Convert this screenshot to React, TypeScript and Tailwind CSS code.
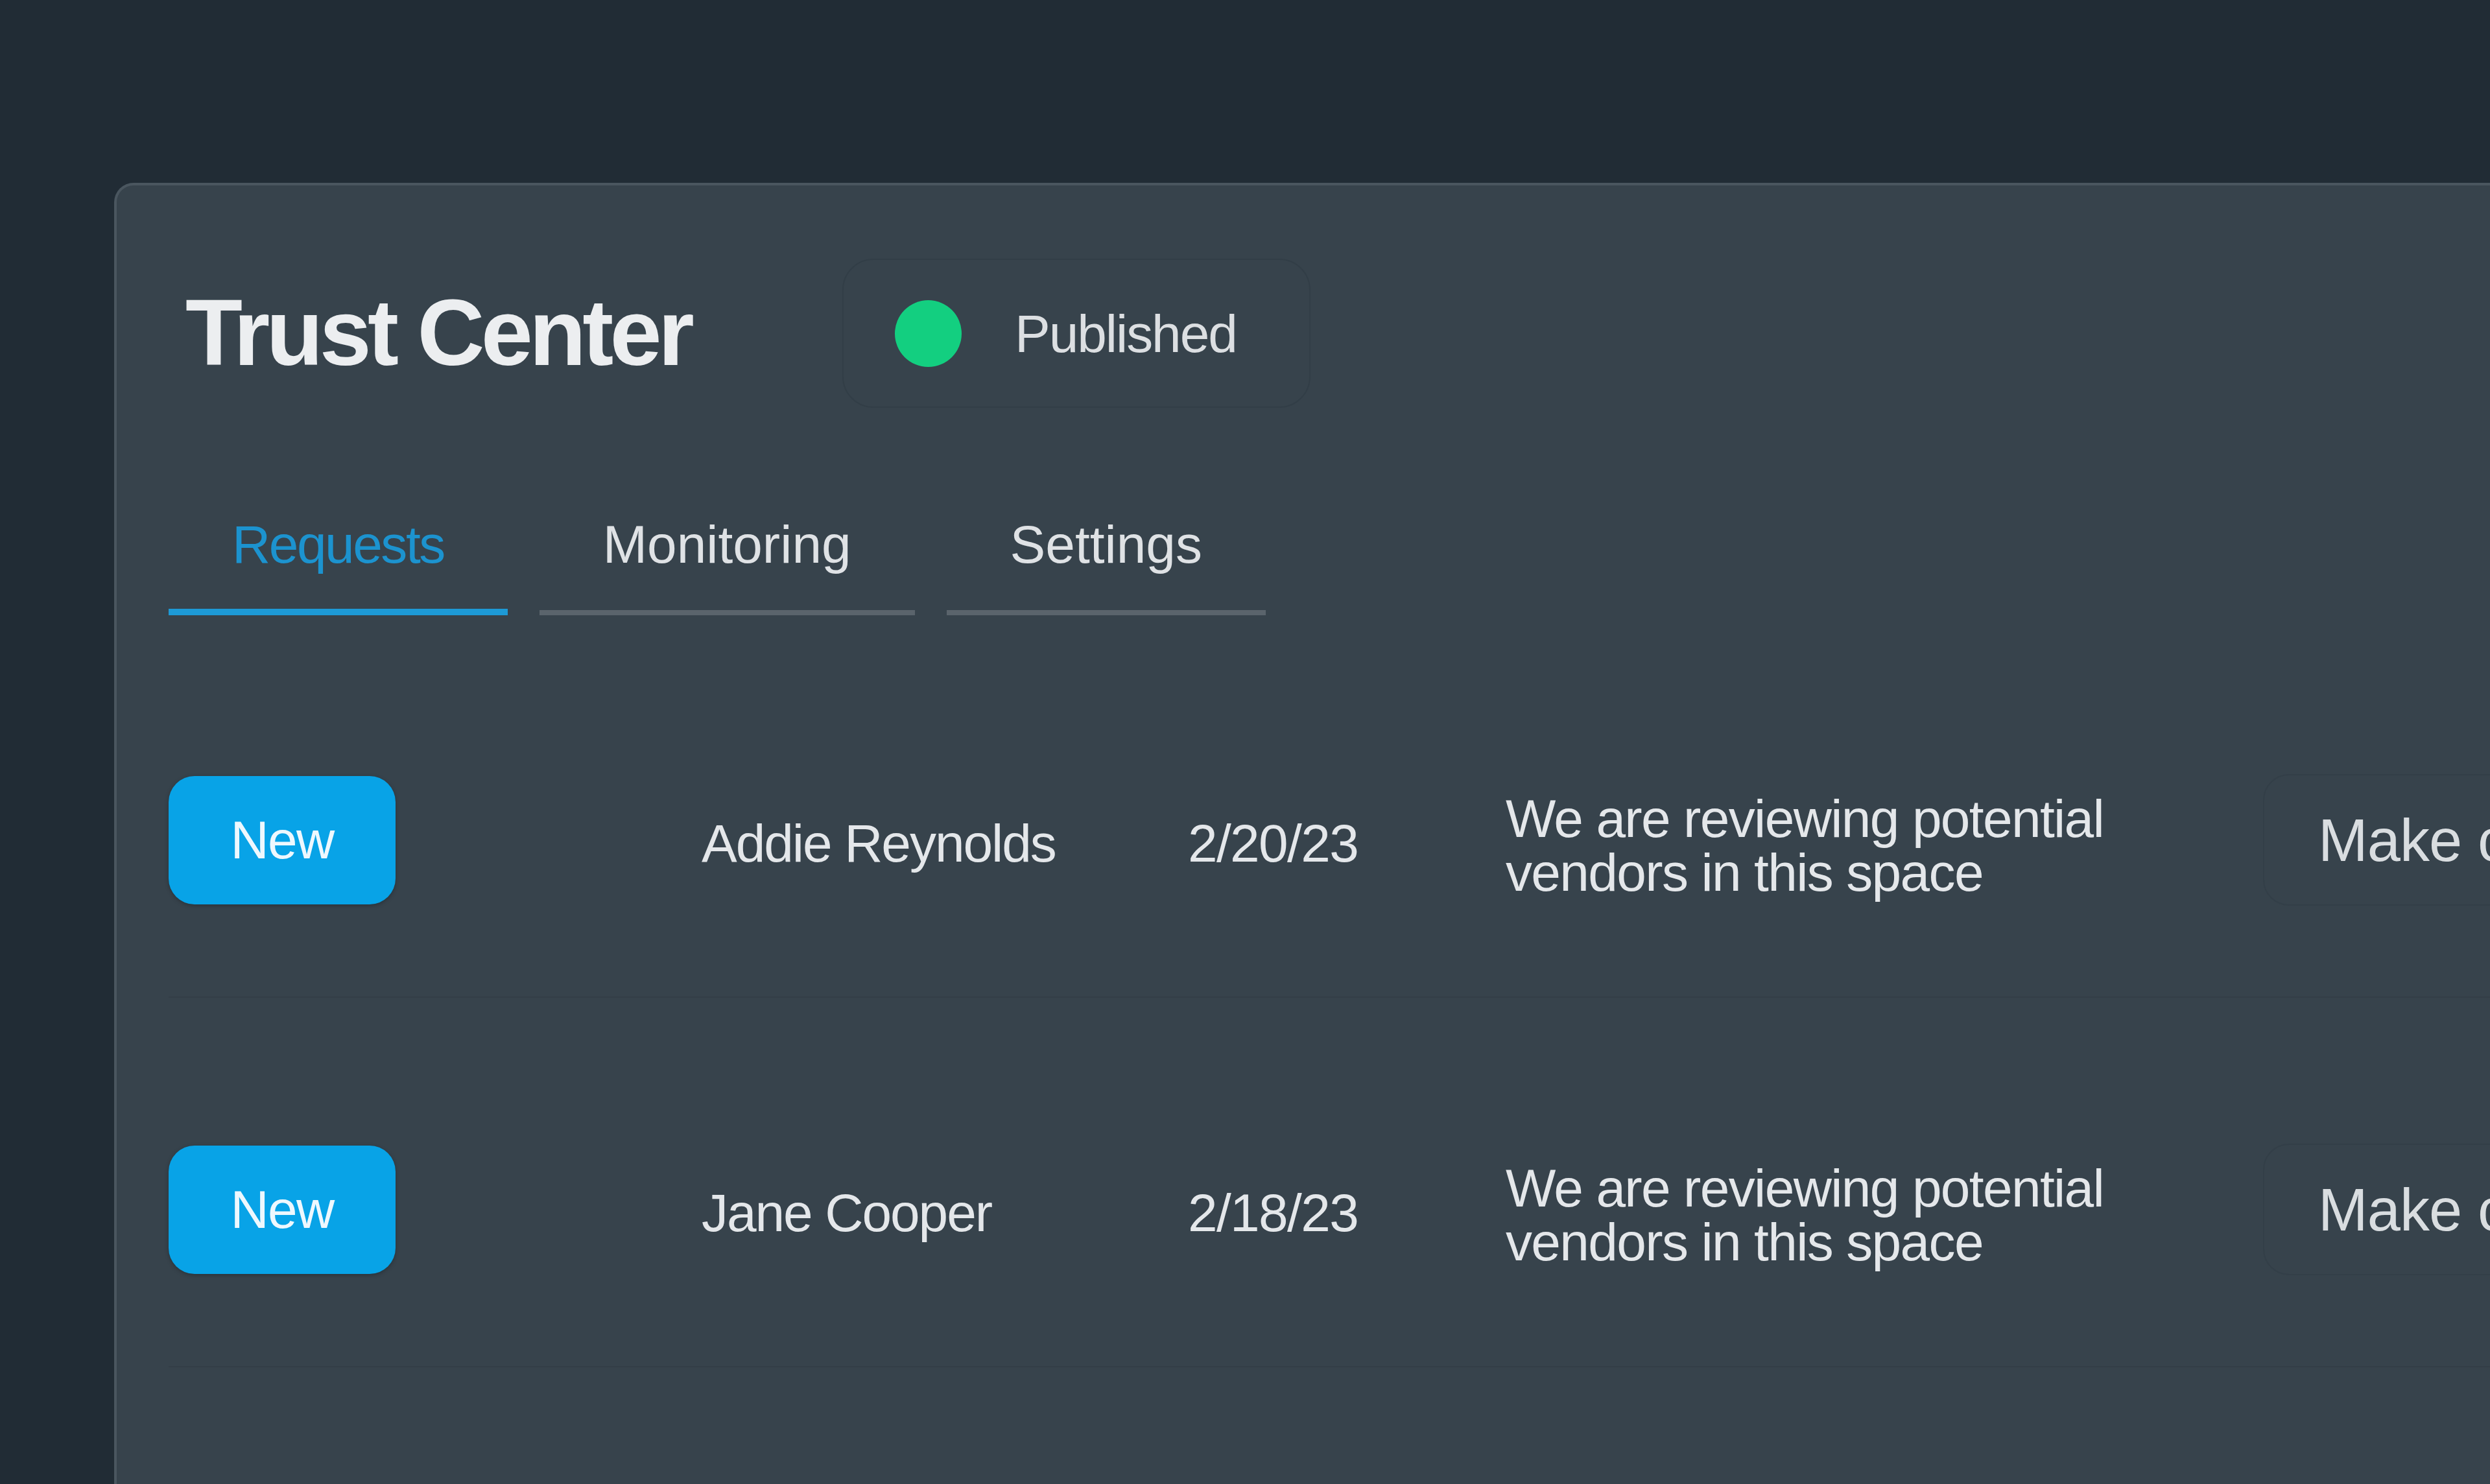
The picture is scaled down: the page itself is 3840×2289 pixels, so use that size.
import React, { useState } from 'react';

type Request = {
  id: number;
  status: string;
  name: string;
  date: string;
  reason: string;
};

const requests: Request[] = [
  { id: 1, status: 'New', name: 'Addie Reynolds', date: '2/20/23', reason: 'We are reviewing potential vendors in this space' },
  { id: 2, status: 'New', name: 'Jane Cooper', date: '2/18/23', reason: 'We are reviewing potential vendors in this space' },
];

const tabs = ['Requests', 'Monitoring', 'Settings'];

const RequestRow: React.FC<{ request: Request }> = ({ request }) => (
  <div className="grid grid-cols-[822px_750px_490px_1168px_1fr] items-center pt-[225px] pb-[140px] border-b-2 border-[#333e47]">
    <div>
      <span className="flex items-center justify-center w-[350px] h-[198px] rounded-[40px] bg-[#08a3e7] text-[82px] text-[#eef8fe] tracking-[-0.02em] shadow-[0_2px_6px_rgba(0,0,0,0.25)]">
        {request.status}
      </span>
    </div>
    <span className="mt-[10px] text-[82px] leading-none text-[#e4e7ea] tracking-[-0.025em]">{request.name}</span>
    <span className="mt-[10px] text-[82px] leading-none text-[#e4e7ea] tracking-[-0.02em]">{request.date}</span>
    <p className="mt-[16px] w-[980px] text-[82px] leading-[83px] text-[#e4e7ea] tracking-[-0.02em]">{request.reason}</p>
    <button className="flex items-center h-[203px] pl-[83px] pr-[60px] rounded-[40px] border-2 border-[#333f48] text-[92px] text-[#d9dde0] tracking-[-0.01em] whitespace-nowrap">
      Make contact
    </button>
  </div>
);

export default function App() {
  const [activeTab, setActiveTab] = useState('Requests');

  return (
    <div className="h-[2289px] w-full overflow-hidden bg-[#212c35] font-['Liberation_Sans',Arial,sans-serif]">
      <div className="ml-[176px] mt-[282px] w-[3800px] min-h-[2100px] rounded-tl-[30px] border-t-[4px] border-l-[4px] border-[#4a565f] bg-[#37434c]">
        {/* header */}
        <div className="flex items-center pl-[106px] pt-[113px]">
          <h1 className="text-[144px] leading-none font-bold text-[#eceef0] tracking-[-0.04em]">Trust Center</h1>
          <div className="ml-[234px] flex items-center h-[230px] pl-[79px] pr-[112px] rounded-[48px] border-2 border-[#323e47]">
            <span className="w-[103px] h-[103px] rounded-full bg-[#13cf80]" />
            <span className="ml-[82px] text-[82px] text-[#dcdfe2] tracking-[-0.025em]">Published</span>
          </div>
        </div>

        {/* tabs */}
        <div className="flex gap-[49px] pl-[80px] mt-[162px]">
          {tabs.map(tab => {
            const active = tab === activeTab;
            return (
              <button
                key={tab}
                onClick={() => setActiveTab(tab)}
                className={
                  active
                    ? 'px-[98px] pb-[50px] border-b-[10px] border-[#1d9ad6] text-[82px] leading-[98px] text-[#1c93cf] tracking-[-0.03em]'
                    : 'px-[98px] pb-[52px] border-b-[8px] border-[#5a646c] text-[82px] leading-[98px] text-[#dfe2e5] tracking-normal'
                }
              >
                {tab}
              </button>
            );
          })}
        </div>

        {/* request list */}
        <div className="pl-[80px] mt-[20px]">
          {requests.map(r => (
            <RequestRow key={r.id} request={r} />
          ))}
        </div>
      </div>
    </div>
  );
}
